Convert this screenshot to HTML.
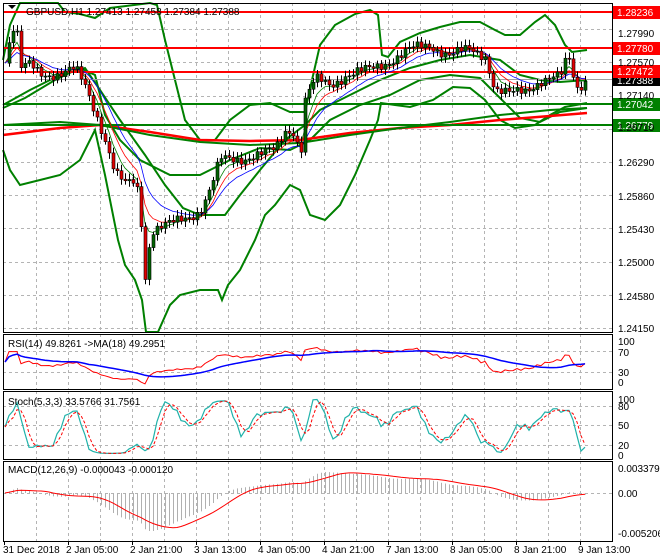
<!DOCTYPE html>
<html><head><meta charset="utf-8"><style>
html,body{margin:0;padding:0;background:#fff;width:660px;height:560px;overflow:hidden}
svg{display:block;font-family:"Liberation Sans",sans-serif}
</style></head><body>
<svg id="s" width="660" height="560" xmlns="http://www.w3.org/2000/svg">
<rect width="660" height="560" fill="#fff"/>
<g id="grid" stroke="#b4b4b4" stroke-dasharray="3,3" stroke-width="1"></g>
<g id="chart"></g>
<g font-size="10" fill="#000">
<text x="26" y="15">GBPUSD,H1  1.27413 1.27458 1.27384 1.27388</text>
<text x="618" y="37">1.27990</text>
<text x="618" y="66">1.27570</text>
<text x="618" y="99">1.27140</text>
<text x="618" y="131">1.26710</text>
<text x="618" y="166">1.26290</text>
<text x="618" y="200">1.25860</text>
<text x="618" y="233">1.25430</text>
<text x="618" y="266">1.25000</text>
<text x="618" y="300">1.24580</text>
<text x="618" y="332">1.24150</text>
<text x="8" y="347">RSI(14) 49.8261  -&gt;MA(18) 49.2951</text>
<text x="618" y="345">100</text><text x="618" y="356">70</text><text x="618" y="376">30</text><text x="618" y="386">0</text>
<text x="8" y="405">Stoch(5,3,3) 33.5766 31.7561</text>
<text x="618" y="403">100</text><text x="618" y="410">80</text><text x="618" y="429">50</text><text x="618" y="449">20</text><text x="618" y="459">0</text>
<text x="8" y="473">MACD(12,26,9) -0.000043 -0.000120</text>
<text x="618" y="472">0.003379</text><text x="618" y="497">0.00</text><text x="618" y="537">-0.005206</text>
<text x="3" y="553">31 Dec 2018</text><text x="66" y="553">2 Jan 05:00</text><text x="130" y="553">2 Jan 21:00</text>
<text x="194" y="553">3 Jan 13:00</text><text x="258" y="553">4 Jan 05:00</text><text x="322" y="553">4 Jan 21:00</text>
<text x="386" y="553">7 Jan 13:00</text><text x="450" y="553">8 Jan 05:00</text><text x="514" y="553">8 Jan 21:00</text>
<text x="578" y="553">9 Jan 13:00</text>
</g>
<path d="M8 5 L16 5 L12 9 Z" fill="#000"/>
</svg>
<script>
(function(){
var NS="http://www.w3.org/2000/svg",S=document.getElementById('s'),G=document.getElementById('grid'),C=document.getElementById('chart');
function el(p,t,a){var e=document.createElementNS(NS,t);for(var k in a)e.setAttribute(k,a[k]);p.appendChild(e);return e;}
function pl(p,pts,col,w,extra){var d=pts.map(function(q,i){return (i?'L':'M')+q[0].toFixed(1)+' '+q[1].toFixed(1)}).join(' ');var a={d:d,fill:'none',stroke:col,'stroke-width':w};if(extra)for(var k in extra)a[k]=extra[k];return el(p,'path',a);}
[29,62,96,129,162,195,228,262,295,328].forEach(function(y){el(G,'line',{x1:3,x2:612,y1:y+.5,y2:y+.5});});
[351,372].forEach(function(y){el(G,'line',{x1:3,x2:612,y1:y+.5,y2:y+.5});});
[406,425,445].forEach(function(y){el(G,'line',{x1:3,x2:612,y1:y+.5,y2:y+.5});});
[493].forEach(function(y){el(G,'line',{x1:3,x2:612,y1:y+.5,y2:y+.5});});
for(var x=36;x<612;x+=32){[[3,332],[334,389],[391,459],[461,541]].forEach(function(r){el(G,'line',{x1:x+.5,x2:x+.5,y1:r[0],y2:r[1]});});}
var K=[[5,60],[12,30],[16,25],[20,70],[30,65],[40,72],[60,75],[75,70],[85,85],[95,110],[105,140],[115,175],[125,185],[135,180],[140,200],[144,285],[148,250],[152,230],[170,225],[190,215],[200,210],[210,190],[220,160],[240,158],[260,155],[275,150],[285,130],[295,130],[300,160],[305,100],[315,80],[330,85],[345,75],[370,70],[390,60],[410,50],[430,45],[450,55],[470,50],[485,55],[495,90],[510,95],[525,90],[540,80],[560,78],[568,55],[576,88],[587,78]];
function interp(x){for(var i=1;i<K.length;i++)if(x<=K[i][0]){var a=K[i-1],b=K[i],t=(x-a[0])/(b[0]-a[0]);return a[1]+(b[1]-a[1])*t;}return K[K.length-1][1];}
var N=[],xs=[];for(var x=5;x<=587;x+=4){xs.push(x);N.push(interp(x)+4*Math.sin(x*1.7)+3*Math.sin(x*0.63));}
function P(y){return 1.28236-(y-12)/7790;}
function ema(a,n){var k=2/(n+1),r=[a[0]];for(var i=1;i<a.length;i++)r.push(r[i-1]+k*(a[i]-r[i-1]));return r;}
function zip(a){return a.map(function(v,i){return [xs[i],v];});}
var OU=[[3,60],[10,25],[20,3],[58,3],[65,12],[80,14],[95,18],[110,8],[150,3],[157,5],[165,40],[175,80],[185,120],[200,140],[215,140],[230,120],[250,105],[270,103],[290,112],[305,112],[312,80],[320,45],[335,25],[355,14],[370,10],[378,15],[382,55],[388,57],[400,42],[420,33],[440,27],[460,22],[480,22],[495,30],[505,35],[520,35],[535,22],[545,15],[555,25],[565,45],[572,52],[587,50]];
var OL=[[3,150],[10,170],[20,185],[40,180],[60,175],[80,160],[95,130],[105,175],[118,240],[125,265],[135,280],[142,300],[146,332],[158,332],[170,305],[180,295],[200,290],[218,290],[222,300],[228,285],[240,270],[255,240],[265,215],[275,205],[290,185],[300,190],[310,215],[325,220],[340,205],[355,175],[370,140],[378,120],[381,103],[395,105],[410,107],[433,100],[453,87],[470,88],[485,100],[500,120],[515,128],[535,125],[550,115],[565,107],[587,103]];
var IU=[[3,105],[30,90],[60,75],[85,68],[100,90],[120,120],[145,155],[165,185],[183,208],[200,215],[225,215],[240,195],[260,170],[285,140],[305,125],[320,110],[350,95],[380,80],[410,68],[440,60],[470,55],[500,60],[520,75],[540,80],[560,82],[587,80]];
var IL=[[3,108],[25,98],[55,80],[80,68],[95,75],[105,115],[120,140],[140,160],[170,175],[200,175],[230,160],[260,148],[290,150],[310,140],[330,120],[360,105],[390,95],[420,80],[450,75],[480,78],[500,98],[520,118],[540,122],[560,112],[587,108]];
[OU,OL,IU,IL].forEach(function(b){pl(C,b,'#008000',2);});
pl(C,[[3,135],[60,128],[100,125],[150,132],[200,140],[250,141],[300,140],[350,133],[400,128],[450,125],[500,120],[550,116],[587,113]],'#ff0000',2.5);
pl(C,[[3,125],[60,122],[100,125],[150,135],[200,142],[250,145],[300,143],[350,135],[400,128],[450,122],[500,115],[550,110],[587,108]],'#008000',2);
el(C,'line',{x1:3,x2:612,y1:79.5,y2:79.5,stroke:'#a0a0a0','stroke-width':1});
[[12,'#ff0000'],[48,'#ff0000'],[72,'#ff0000'],[104,'#008000'],[125,'#008000']].forEach(function(l){el(C,'line',{x1:3,x2:612,y1:l[0],y2:l[0],stroke:l[1],'stroke-width':2});});
pl(C,zip(ema(N,5)),'#008000',.8);pl(C,zip(ema(N,8)),'#ff0000',.8);pl(C,zip(ema(N,13)),'#0000ff',.8);
for(var i=1;i<N.length;i++){var o=N[i-1],c=N[i],x=xs[i];var hi=Math.min(o,c)-3-3*Math.abs(Math.sin(x*2.3)),lo=Math.max(o,c)+3+3*Math.abs(Math.cos(x*1.9));
el(C,'line',{x1:x+.5,x2:x+.5,y1:hi,y2:lo,stroke:'#000','stroke-width':1});
var bt=Math.min(o,c),bh=Math.max(1,Math.abs(o-c));el(C,'rect',{x:x-1,y:bt,width:3,height:bh,fill:c<o?'#006400':'#e00000',stroke:'#000','stroke-width':.6});}
el(C,'rect',{x:613,y:75,width:47,height:11,fill:'#000'});
var t=el(C,'text',{x:617,y:84,fill:'#fff','font-size':'10'});t.textContent='1.27388';
[[12,'#ff0000','1.28236'],[48,'#ff0000','1.27780'],[71,'#ff0000','1.27472'],[104,'#008000','1.27042'],[125,'#008000','1.26779']].forEach(function(l){
el(C,'rect',{x:613,y:l[0]-6,width:47,height:13,fill:l[1]});
var t=el(C,'text',{x:617,y:l[0]+4,fill:'#fff','font-size':'10'});t.textContent=l[2];});
var pr=N.map(P),rsi=[50],ag=0,al=0;for(var i=1;i<pr.length;i++){var d=pr[i]-pr[i-1];var g=Math.max(d,0),l=Math.max(-d,0);if(i<=14){ag+=g/14;al+=l/14;}else{ag=(ag*13+g)/14;al=(al*13+l)/14;}rsi.push(al==0?70:100-100/(1+ag/al));}
function ry(v){return 388-v*0.52;}
pl(C,zip(rsi.map(ry)),'#ff0000',1);
var rma=[];for(var i=0;i<rsi.length;i++){var s=0,n=0;for(var j=Math.max(0,i-17);j<=i;j++){s+=rsi[j];n++;}rma.push(s/n);}
pl(C,zip(rma.map(ry)),'#0000ff',1.5);
var st=[];for(var i=0;i<pr.length;i++){var h=-1,l=9;for(var j=Math.max(0,i-4);j<=i;j++){h=Math.max(h,pr[j]+.0004);l=Math.min(l,pr[j]-.0004);}st.push(100*(pr[i]-l)/(h-l));}
function sma(a,n){return a.map(function(v,i){var s=0,c=0;for(var j=Math.max(0,i-n+1);j<=i;j++){s+=a[j];c++;}return s/c;});}
var k=sma(st,3),dd=sma(k,3);function sy(v){return 457-v*0.6;}
pl(C,zip(k.map(sy)),'#20b2aa',1.2);pl(C,zip(dd.map(sy)),'#ff0000',1,{'stroke-dasharray':'3,2'});
var m12=ema(pr,12),m26=ema(pr,26),mac=m12.map(function(v,i){return v-m26[i];}),sig=sma(mac,9);
var mx=Math.max.apply(null,mac),mn=Math.min.apply(null,mac);var sc=Math.min(24/mx,38/(-mn));
function my(v){return 493-v*sc;}
mac.forEach(function(v,i){el(C,'line',{x1:xs[i]+.5,x2:xs[i]+.5,y1:493,y2:my(v),stroke:'#b0b0b0','stroke-width':1});});
pl(C,zip(sig.map(my)),'#ff0000',1);
[[3,3,609,329],[3,334,609,55],[3,391,609,68],[3,461,609,80]].forEach(function(r){el(C,'rect',{x:r[0]+.5,y:r[1]+.5,width:r[2],height:r[3],fill:'none',stroke:'#000','stroke-width':1});});
for(var x=4;x<612;x+=64)el(C,'line',{x1:x+.5,x2:x+.5,y1:541,y2:545,stroke:'#000'});
})();
</script>
</body></html>
